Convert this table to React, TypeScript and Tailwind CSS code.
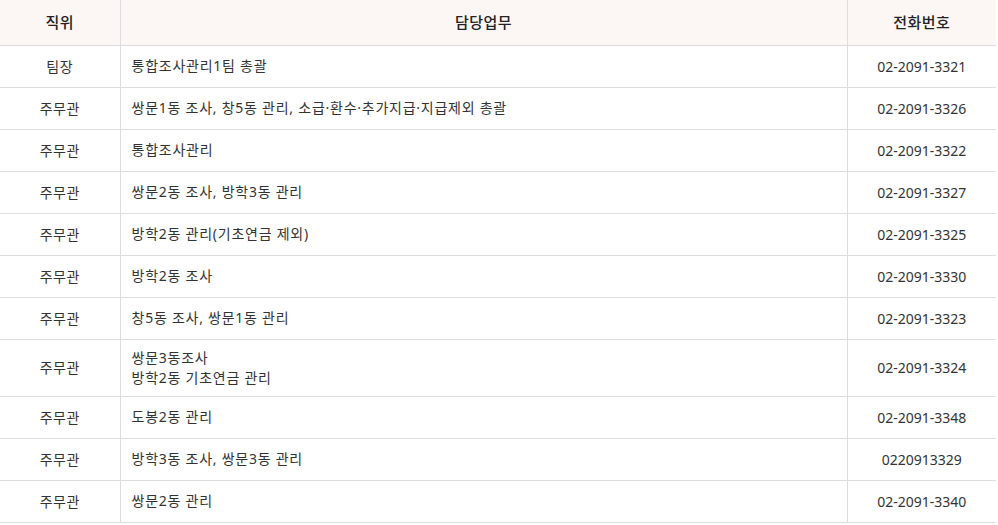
const rows: { pos: string; work: string[]; tel: string }[] = [
  { pos: "팀장", work: ["통합조사관리1팀 총괄"], tel: "02-2091-3321" },
  { pos: "주무관", work: ["쌍문1동 조사, 창5동 관리, 소급·환수·추가지급·지급제외 총괄"], tel: "02-2091-3326" },
  { pos: "주무관", work: ["통합조사관리"], tel: "02-2091-3322" },
  { pos: "주무관", work: ["쌍문2동 조사, 방학3동 관리"], tel: "02-2091-3327" },
  { pos: "주무관", work: ["방학2동 관리(기초연금 제외)"], tel: "02-2091-3325" },
  { pos: "주무관", work: ["방학2동 조사"], tel: "02-2091-3330" },
  { pos: "주무관", work: ["창5동 조사, 쌍문1동 관리"], tel: "02-2091-3323" },
  { pos: "주무관", work: ["쌍문3동조사", "방학2동 기초연금 관리"], tel: "02-2091-3324" },
  { pos: "주무관", work: ["도봉2동 관리"], tel: "02-2091-3348" },
  { pos: "주무관", work: ["방학3동 조사, 쌍문3동 관리"], tel: "0220913329" },
  { pos: "주무관", work: ["쌍문2동 관리"], tel: "02-2091-3340" },
]

export default function App() {
  return (
    <div className="bg-white" style={{ fontFamily: '"Noto Sans", "Noto Sans CJK KR", sans-serif' }}>
      <table className="w-[996px] border-collapse text-[14px] text-[#333]">
        <colgroup>
          <col className="w-[120px]" />
          <col className="w-[727px]" />
          <col className="w-[149px]" />
        </colgroup>
        <thead>
          <tr className="h-[45px] bg-[#fcf6f4] text-[15px] text-[#222]">
            <th className="border-b border-r border-[#ddd] font-medium tracking-[0.5px]">직위</th>
            <th className="border-b border-r border-[#ddd] font-medium tracking-[0.5px]">담당업무</th>
            <th className="border-b border-[#ddd] font-medium tracking-[0.5px]">전화번호</th>
          </tr>
        </thead>
        <tbody>
          {rows.map((r, i) => (
            <tr key={i} className={r.work.length > 1 ? "h-[57px]" : "h-[42px]"}>
              <td className="border-b border-r border-[#ddd] text-center tracking-[0.5px]">{r.pos}</td>
              <td className="border-b border-r border-[#ddd] px-[11px] leading-[20px] tracking-[0.75px]">
                {r.work.map((w, j) => (
                  <div key={j}>{w}</div>
                ))}
              </td>
              <td className="border-b border-[#ddd] text-center">{r.tel}</td>
            </tr>
          ))}
        </tbody>
      </table>
    </div>
  )
}
